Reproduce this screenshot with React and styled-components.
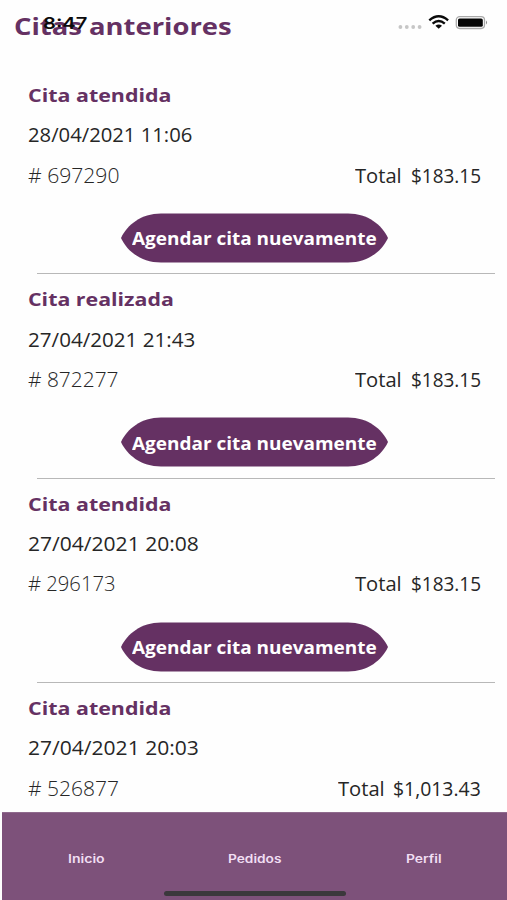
import React, { useLayoutEffect, useRef, useState } from 'react';
import styled, { createGlobalStyle } from 'styled-components';

const purple = '#653163';

const GlobalStyle = createGlobalStyle`
  * {
    box-sizing: border-box;
  }
  body {
    margin: 0;
    background: #fefefe;
    font-family: 'Open Sans', 'Noto Sans', sans-serif;
  }
`;

const Screen = styled.div`
  position: relative;
  width: 507px;
  height: 900px;
  overflow: hidden;
  display: flex;
  flex-direction: column;
  background: #fefefe;
`;

const StatusBar = styled.div`
  position: absolute;
  top: 0;
  left: 0;
  width: 100%;
  height: 46px;
  padding: 0 18px 0 42.5px;
  display: flex;
  align-items: center;
  justify-content: space-between;
`;

const Clock = styled.div`
  font-family: Inter, sans-serif;
  font-size: 16.5px;
  font-weight: 600;
  line-height: 20px;
  color: #0c0a0c;
`;

const Header = styled.header`
  height: 70px;
  flex-shrink: 0;
  padding: 9px 0 0 14px;
`;

const Title = styled.h1`
  margin: 0;
  font-size: 23px;
  font-weight: 700;
  line-height: 34px;
  color: ${purple};
`;

const List = styled.main`
  height: 742px;
  flex-shrink: 0;
  overflow: hidden;
`;

const Appointment = styled.section`
  height: 204.3px;
  padding: 4.8px 26.5px 0 28px;
  display: flex;
  flex-direction: column;
`;

const Line = styled.div`
  height: 40.4px;
  flex-shrink: 0;
  display: flex;
  align-items: center;
  justify-content: space-between;
  font-size: 19.5px;
  line-height: 40px;
  color: #262626;
`;

const Status = styled(Line)`
  font-size: 18.5px;
  font-weight: 700;
  color: ${purple};
`;

const OrderNumber = styled.div`
  font-weight: 300;
  color: #262626;
`;

const Total = styled.div`
  display: flex;
  gap: 9px;
`;

const ScheduleButton = styled.button`
  width: 267px;
  height: 50px;
  margin: 17px 0 0 92.5px;
  padding: 0;
  flex-shrink: 0;
  border: 0;
  display: grid;
  place-items: center;
  background: none;
  color: #fff;
  font-family: inherit;
  font-size: 18.5px;
  font-weight: 700;

  > * {
    grid-area: 1 / 1;
  }
`;

const Divider = styled.hr`
  width: 458px;
  height: 1px;
  margin: 10.5px 0 0 8.5px;
  border: 0;
  flex-shrink: 0;
  background: #b8b8b8;
`;

const TabBar = styled.nav`
  flex: 1;
  margin-left: 1.5px;
  padding-top: 2px;
  display: grid;
  grid-template-columns: repeat(3, 169px);
  align-items: center;
  justify-items: center;
  background: #7d517a;
  border-top: 1px solid #8f6a8d;
`;

const Tab = styled.div`
  padding-top: 3px;
  font-family: Inter, sans-serif;
  font-size: 11.2px;
  font-weight: 600;
  line-height: 20px;
  color: #f1def3;
`;

const HomeIndicator = styled.div`
  position: absolute;
  left: 164px;
  bottom: 4px;
  width: 182px;
  height: 5.5px;
  border-radius: 3px;
  background: #3b383c;
`;

const FitBox = styled.span`
  display: inline-block;
  text-align: left;
  white-space: pre;
`;

const FitInner = styled.span`
  display: inline-block;
  transform-origin: 0 50%;
`;

// Widens a label horizontally until it fills the given width
function Fit({ width, children }) {
  const ref = useRef(null);
  const [scale, setScale] = useState(1);

  useLayoutEffect(() => {
    setScale(width / ref.current.offsetWidth);
  }, [width, children]);

  return (
    <FitBox style={{ width }}>
      <FitInner ref={ref} style={{ transform: `scaleX(${scale})` }}>
        {children}
      </FitInner>
    </FitBox>
  );
}

const StatusIcons = () => (
  <svg width="92" height="20" viewBox="0 0 92 20">
    <g fill="#c6c6c6">
      <circle cx="3.4" cy="14" r="1.9" />
      <circle cx="9.8" cy="14" r="1.9" />
      <circle cx="16.2" cy="14" r="1.9" />
      <circle cx="22.6" cy="14" r="1.9" />
    </g>
    <g fill="none" stroke="#0a0a0a" strokeWidth="2.4">
      <path d="M32.3 7.4Q41.7 -0.8 51.1 7.4" />
      <path d="M35.6 10.7Q41.7 5.5 47.8 10.7" />
    </g>
    <path d="M38.4 12.8Q41.7 10.2 45 12.8L41.7 15.7Z" fill="#0a0a0a" />
    <rect x="59.3" y="3.7" width="28.2" height="11.8" rx="3.4" fill="none" stroke="#a9a9a9" strokeWidth="1.3" />
    <rect x="61" y="5.4" width="24.8" height="8.4" rx="1.6" fill="#050505" />
    <path d="M89 7.6Q91.2 9.6 89 11.6Z" fill="#8e8e8e" />
  </svg>
);

const ButtonShape = () => (
  <svg width="267" height="50" viewBox="0 0 267 50">
    <path
      d="M0 25C6 12 20 .5 40 .5H227C247 .5 261 12 267 25C261 38 247 49.5 227 49.5H40C20 49.5 6 38 0 25Z"
      fill="#653163"
    />
  </svg>
);

const appointments = [
  { status: 'Cita atendida', statusWidth: 143.5, date: '28/04/2021 11:06', dateWidth: 164, number: '# 697290', numberWidth: 91, total: '$183.15', totalWidth: 70 },
  { status: 'Cita realizada', statusWidth: 145.5, date: '27/04/2021 21:43', dateWidth: 167, number: '# 872277', numberWidth: 90, total: '$183.15', totalWidth: 70 },
  { status: 'Cita atendida', statusWidth: 143.5, date: '27/04/2021 20:08', dateWidth: 170.5, number: '# 296173', numberWidth: 87, total: '$183.15', totalWidth: 70 },
  { status: 'Cita atendida', statusWidth: 143.5, date: '27/04/2021 20:03', dateWidth: 170.5, number: '# 526877', numberWidth: 90.5, total: '$1,013.43', totalWidth: 87.5 },
];

export default function App() {
  return (
    <>
      <GlobalStyle />
      <Screen>
        <Header>
          <Title>
            <Fit width={218}>Citas anteriores</Fit>
          </Title>
        </Header>
        <List>
          {appointments.map(item => (
            <Appointment key={item.number}>
              <Status>
                <Fit width={item.statusWidth}>{item.status}</Fit>
              </Status>
              <Line>
                <Fit width={item.dateWidth}>{item.date}</Fit>
              </Line>
              <Line>
                <OrderNumber>
                  <Fit width={item.numberWidth}>{item.number}</Fit>
                </OrderNumber>
                <Total>
                  <Fit width={46.5}>Total</Fit>
                  <Fit width={item.totalWidth}>{item.total}</Fit>
                </Total>
              </Line>
              <ScheduleButton>
                <ButtonShape />
                <Fit width={245}>Agendar cita nuevamente</Fit>
              </ScheduleButton>
              <Divider />
            </Appointment>
          ))}
        </List>
        <TabBar>
          <Tab>
            <Fit width={36.5}>Inicio</Fit>
          </Tab>
          <Tab>
            <Fit width={54}>Pedidos</Fit>
          </Tab>
          <Tab>
            <Fit width={36}>Perfil</Fit>
          </Tab>
        </TabBar>
        <StatusBar>
          <Clock>
            <Fit width={44}>8:47</Fit>
          </Clock>
          <StatusIcons />
        </StatusBar>
        <HomeIndicator />
      </Screen>
    </>
  );
}
